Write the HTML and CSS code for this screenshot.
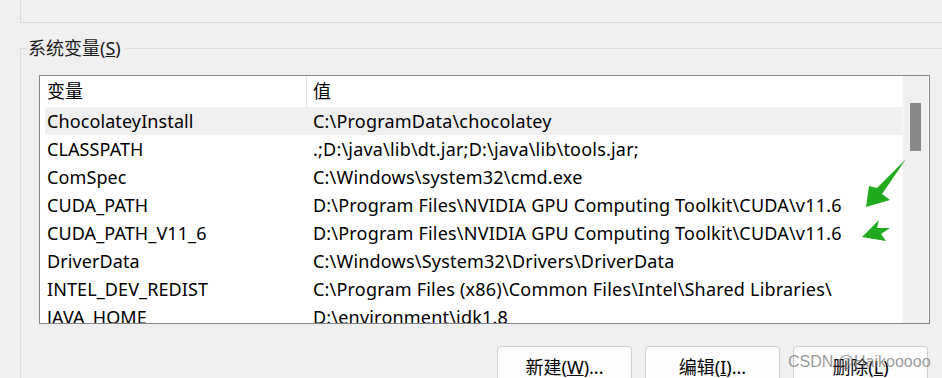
FILE: index.html
```html
<!DOCTYPE html>
<html lang="zh">
<head>
<meta charset="utf-8">
<link rel="stylesheet" href="styles.css">
</head>
<body>
<div class="top"></div>
<fieldset class="group">
  <legend>系统变量(<u>S</u>)</legend>
  <div class="list">
    <div class="main">
      <div class="head">
        <div class="hcol hname">变量</div>
        <div class="hcol hval">值</div>
      </div>
      <div class="rows">
        <div class="row sel"><span class="n">ChocolateyInstall</span><span class="v">C:\ProgramData\chocolatey</span></div>
        <div class="row"><span class="n">CLASSPATH</span><span class="v">.;D:\java\lib\dt.jar;D:\java\lib\tools.jar;</span></div>
        <div class="row"><span class="n">ComSpec</span><span class="v">C:\Windows\system32\cmd.exe</span></div>
        <div class="row"><span class="n">CUDA_PATH</span><span class="v">D:\Program Files\NVIDIA GPU Computing Toolkit\CUDA\v11.6</span></div>
        <div class="row"><span class="n">CUDA_PATH_V11_6</span><span class="v">D:\Program Files\NVIDIA GPU Computing Toolkit\CUDA\v11.6</span></div>
        <div class="row"><span class="n">DriverData</span><span class="v">C:\Windows\System32\Drivers\DriverData</span></div>
        <div class="row"><span class="n">INTEL_DEV_REDIST</span><span class="v">C:\Program Files (x86)\Common Files\Intel\Shared Libraries\</span></div>
        <div class="row"><span class="n">JAVA_HOME</span><span class="v">D:\environment\jdk1.8</span></div>
      </div>
    </div>
    <div class="scroll"><div class="thumb"></div></div>
  </div>
  <div class="buttons">
    <button class="btn">新建(<u>W</u>)...</button>
    <button class="btn">编辑(<u>I</u>)...</button>
    <button class="btn">删除(<u>L</u>)</button>
  </div>
</fieldset>
<div class="watermark">CSDN @Haikooooo</div>
<svg class="arrows" width="942" height="378" viewBox="0 0 942 378">
  <polygon fill="#22aa1e" points="866,207 869,186 877,188 906,159 882,194 890,200"/>
  <polygon fill="#22aa1e" points="862,237 879,220 877,228 890,228 881,234 886,241"/>
</svg>
</body>
</html>
```

FILE: styles.css
```css
html, body {
  margin: 0;
  padding: 0;
}
body {
  width: 942px;
  height: 378px;
  overflow: hidden;
  background: #f0f0f0;
  font-family: "Noto Sans", "Noto Sans CJK SC", sans-serif;
  color: #000;
  position: relative;
}
.top {
  height: 22px;
  margin-left: 20px;
  border-left: 1px solid #dcdcdc;
  border-bottom: 1px solid #dcdcdc;
}
.group {
  margin: 13px 0 0 20px;
  padding: 0 0 0 18px;
  border: 0;
  border-top: 1px solid #dcdcdc;
  border-left: 1px solid #dcdcdc;
  min-width: 0;
}
.group legend {
  font-size: 18px;
  line-height: 24px;
  padding: 0 4px 0 1px;
  margin-left: -12px;
  color: #1a1a1a;
}
.list {
  margin-top: 15px;
  width: 889px;
  height: 247px;
  border: 1px solid #828790;
  display: flex;
  background: #fff;
}
.main {
  width: 862px;
  display: flex;
  flex-direction: column;
  overflow: hidden;
}
.head {
  height: 31px;
  display: flex;
  flex: none;
  font-size: 18px;
  line-height: 31px;
}
.hcol {
  white-space: nowrap;
}
.hname {
  width: 259px;
  padding-left: 7px;
  border-right: 1px solid #e5e5e5;
}
.hval {
  padding-left: 6px;
}
.rows {
  padding-left: 5px;
  font-size: 18px;
}
.row {
  display: grid;
  grid-template-columns: 268px 1fr;
  height: 28px;
  line-height: 28px;
  white-space: nowrap;
}
.row.sel {
  background: #f0f0f0;
}
.row .n {
  padding-left: 2px;
  letter-spacing: 0.1px;
}
.row .v {
  letter-spacing: 0.2px;
}
.scroll {
  flex: none;
  width: 26px;
  border-left: 1px solid #fafafa;
  background: #f0f0f0;
  padding: 27px 0 0 7px;
  box-sizing: border-box;
}
.thumb {
  width: 11px;
  height: 48px;
  background: #888888;
}
.buttons {
  display: flex;
  justify-content: flex-end;
  gap: 13px;
  margin-top: 22px;
  width: 889px;
}
.btn {
  flex: none;
  width: 135px;
  height: 40px;
  background: #fdfdfd;
  border: 1px solid #d0d0d0;
  border-radius: 4px;
  font-family: "Noto Sans", "Noto Sans CJK SC", sans-serif;
  font-size: 18px;
  color: #000;
  padding: 0;
}
.watermark {
  position: absolute;
  left: 788px;
  top: 352px;
  font-family: "Liberation Sans", sans-serif;
  font-size: 16px;
  line-height: 20px;
  color: rgba(120, 120, 120, 0.75);
  white-space: nowrap;
}
.arrows {
  position: absolute;
  left: 0;
  top: 0;
  pointer-events: none;
}
```
